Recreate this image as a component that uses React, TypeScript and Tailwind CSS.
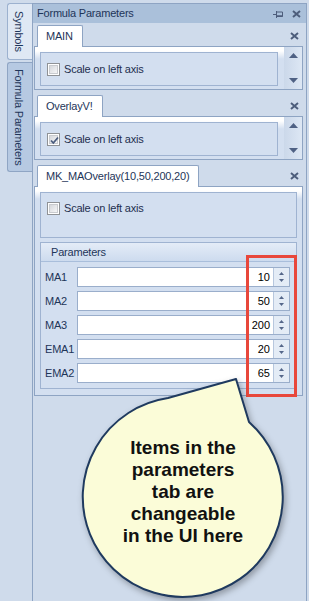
import React from 'react';

const line = 'border-[#8ea4c3]';

const CloseIcon = () => (
  <svg width="9" height="8" viewBox="0 0 9 8" className="block">
    <path d="M1 1 L8 7 M8 1 L1 7" stroke="#4d5d7b" strokeWidth="2" />
  </svg>
);

const PinIcon = () => (
  <svg width="10" height="8" viewBox="0 0 10 8" className="block">
    <path d="M0 4.5 H3.5 M3.5 1 V8" stroke="#4d5d7b" strokeWidth="1" />
    <path d="M3.5 2 H9.5 V6.5 H3.5" stroke="#4d5d7b" strokeWidth="1" fill="none" />
    <path d="M3.5 6 H9.5" stroke="#4d5d7b" strokeWidth="1.5" />
  </svg>
);

const Checkbox = ({ checked }: { checked?: boolean }) => (
  <div className="w-[13px] h-[13px] shrink-0 border border-[#8f9296] bg-white p-[1px]">
    <div className="relative w-full h-full border border-[#c9cbcf] bg-gradient-to-br from-[#d6d8dc] to-[#f6f6f7]">
      {checked && (
        <svg width="11" height="11" viewBox="0 0 11 11" className="absolute -left-[1px] -top-[1px]">
          <path d="M2 5.5 L4.3 8 L9 2.5" stroke="#4a5c7e" strokeWidth="1.8" fill="none" />
        </svg>
      )}
    </div>
  </div>
);

const Tab = ({ title, children }: { title: string; children: React.ReactNode }) => (
  <div>
    <div className="flex items-end justify-between h-[21px]">
      <div className={`relative z-10 ml-[3px] -mb-[1px] h-[22px] pl-[8px] pr-[9px] bg-white border border-b-0 ${line} rounded-t-[2px] flex items-center text-[#1e3559]`}>
        {title}
      </div>
      <div className="self-center mr-[4px]">
        <CloseIcon />
      </div>
    </div>
    <div className={`border ${line} bg-gradient-to-b from-white from-[4px] to-[#d3dff0] to-[12px]`}>{children}</div>
  </div>
);

const Scrollbar = () => (
  <div className="w-[18px] shrink-0 bg-gradient-to-r from-[#cbd8ea] to-[#dde7f4] flex flex-col items-center justify-between py-[6px]">
    <svg width="9" height="5" viewBox="0 0 9 5"><path d="M0 5 L4.5 0 L9 5 Z" fill="#4f6184" /></svg>
    <svg width="9" height="5" viewBox="0 0 9 5"><path d="M0 0 L9 0 L4.5 5 Z" fill="#4f6184" /></svg>
  </div>
);

const ScaleGroup = ({ checked, tall }: { checked?: boolean; tall?: boolean }) => (
  <div
    className={`border border-[#9fb3d1] bg-[#d3dff0] flex pl-[6px] gap-[4px] text-[#1e2f4f] ${
      tall ? 'h-[46px] items-start pt-[9px]' : 'h-[34px] items-center'
    }`}
  >
    <Checkbox checked={checked} />
    <span className="leading-[13px]">Scale on left axis</span>
  </div>
);

const ParamRow = ({ label, value }: { label: string; value: number }) => (
  <div className="flex items-center h-[20px]">
    <span className="w-[32px] shrink-0 text-[#1e3559]">{label}</span>
    <div className="flex-1 h-[20px] flex border border-[#9aaecb] bg-white">
      <div className="flex-1 text-right pr-[3px] leading-[18px] text-black tracking-normal">{value}</div>
      <div className="w-[16px] border-l border-[#b7c7de] bg-[#e4ecf6] flex flex-col items-center justify-center gap-[4px]">
        <svg width="5" height="3" viewBox="0 0 5 3" className="block"><path d="M0 3 L2.5 0 L5 3 Z" fill="#55678a" /></svg>
        <svg width="5" height="3" viewBox="0 0 5 3" className="block"><path d="M0 0 L5 0 L2.5 3 Z" fill="#55678a" /></svg>
      </div>
    </div>
  </div>
);

const params = [
  { label: 'MA1', value: 10 },
  { label: 'MA2', value: 50 },
  { label: 'MA3', value: 200 },
  { label: 'EMA1', value: 20 },
  { label: 'EMA2', value: 65 },
];

export default function App() {
  return (
    <div className="relative w-[309px] h-[601px] overflow-hidden bg-[#cfdbeb] flex text-[11px] tracking-[-0.2px] font-['Liberation_Sans',Arial,sans-serif]">
      {/* side tabs */}
      <div className="w-[32px] shrink-0 pl-[7px] pt-[3px] flex flex-col gap-[2px]">
        <div className="h-[57px] bg-[#dfe8f4] border border-r-0 border-[#9cb1cf] rounded-l-[3px] flex items-center justify-center pr-[2px]">
          <span className="[writing-mode:vertical-rl] text-[#1e3559]">Symbols</span>
        </div>
        <div className="h-[110px] bg-[#b6c9e2] border border-r-0 border-[#8fa5c4] rounded-l-[3px] flex items-center justify-center pr-[2px]">
          <span className="[writing-mode:vertical-rl] text-[#1e3559] whitespace-nowrap">Formula Parameters</span>
        </div>
      </div>

      {/* main panel */}
      <div className={`w-[275px] shrink-0 mt-[3px] border-l border-r border-t ${line} flex flex-col`}>
        <div className="h-[19px] shrink-0 bg-[#aac0da] flex items-center pl-[4px] pr-[5px] text-[#1e3559]">
          <span className="flex-1">Formula Parameters</span>
          <PinIcon />
          <span className="w-[9px]" />
          <CloseIcon />
        </div>

        <div className="flex flex-col gap-[5px] pt-[2px] pl-[1px] pr-[3px]">
          <Tab title="MAIN">
            <div className="flex">
              <div className="flex-1 pl-[5px] pr-[6px] pt-[5px] pb-[3px]">
                <ScaleGroup />
              </div>
              <Scrollbar />
            </div>
          </Tab>

          <Tab title="OverlayV!">
            <div className="flex">
              <div className="flex-1 pl-[5px] pr-[6px] pt-[5px] pb-[3px]">
                <ScaleGroup checked />
              </div>
              <Scrollbar />
            </div>
          </Tab>

          <Tab title="MK_MAOverlay(10,50,200,20)">
            <div className="flex flex-col gap-[4px] px-[5px] pt-[5px] pb-[6px]">
              <ScaleGroup tall />
              <div className="border border-[#9fb3d1] bg-[#d3dff0]">
                <div className="h-[19px] border-b border-[#a9bedb] bg-gradient-to-b from-[#e4ecf7] to-[#cddbee] flex items-center pl-[10px] text-[#1e3559]">
                  Parameters
                </div>
                <div className="flex flex-col gap-[4px] pl-[4px] pr-[6px] pt-[5px] pb-[5px]">
                  {params.map((p) => (
                    <ParamRow key={p.label} label={p.label} value={p.value} />
                  ))}
                </div>
              </div>
            </div>
          </Tab>
        </div>
      </div>

      {/* red highlight */}
      <div className="absolute left-[246px] top-[255px] w-[51px] h-[142px] border-[3px] border-[#e8473b]" />

      {/* callout bubble */}
      <svg
        width="309"
        height="601"
        className="absolute left-0 top-0 pointer-events-none"
        style={{ filter: 'drop-shadow(2px 3px 3px rgba(0,0,0,0.3))' }}
      >
        <path
          d="M236 379 L168 398 A100 100 0 1 0 249 422 Z"
          fill="#fbfcd8"
          stroke="#1f3a5f"
          strokeWidth="2"
          strokeLinejoin="round"
        />
      </svg>
      <div className="absolute left-[113px] top-[437px] w-[140px] text-center font-['Liberation_Sans',Arial,sans-serif] font-bold text-[19px] leading-[22px] tracking-normal text-[#111]">
        Items in the
        <br />
        parameters
        <br />
        tab are
        <br />
        changeable
        <br />
        in the UI here
      </div>
    </div>
  );
}
